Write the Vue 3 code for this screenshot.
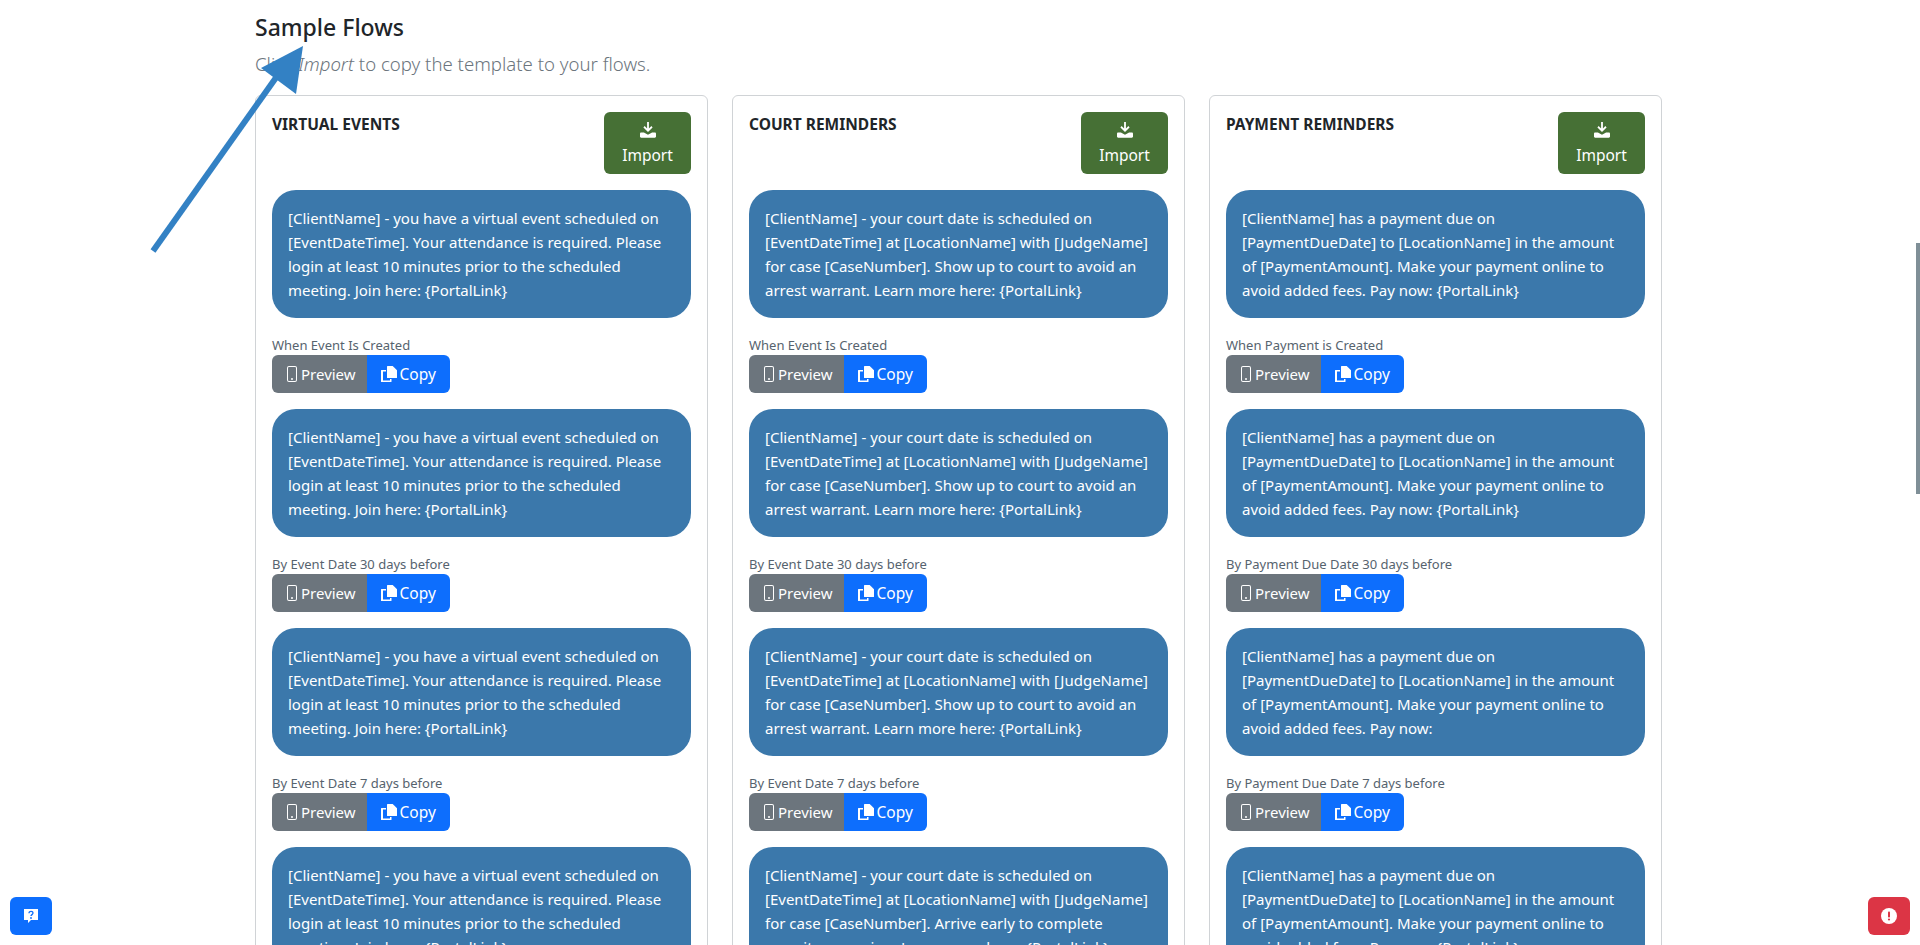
<script setup>
const flows = [
  {
    title: 'VIRTUAL EVENTS',
    messages: [
      { label: 'When Event Is Created', text: '[ClientName] - you have a virtual event scheduled on [EventDateTime]. Your attendance is required. Please login at least 10 minutes prior to the scheduled meeting. Join here: {PortalLink}' },
      { label: 'By Event Date 30 days before', text: '[ClientName] - you have a virtual event scheduled on [EventDateTime]. Your attendance is required. Please login at least 10 minutes prior to the scheduled meeting. Join here: {PortalLink}' },
      { label: 'By Event Date 7 days before', text: '[ClientName] - you have a virtual event scheduled on [EventDateTime]. Your attendance is required. Please login at least 10 minutes prior to the scheduled meeting. Join here: {PortalLink}' },
      { label: 'By Event Date 1 day before', text: '[ClientName] - you have a virtual event scheduled on [EventDateTime]. Your attendance is required. Please login at least 10 minutes prior to the scheduled meeting. Join here: {PortalLink}' }
    ]
  },
  {
    title: 'COURT REMINDERS',
    messages: [
      { label: 'When Event Is Created', text: '[ClientName] - your court date is scheduled on [EventDateTime] at [LocationName] with [JudgeName] for case [CaseNumber]. Show up to court to avoid an arrest warrant. Learn more here: {PortalLink}' },
      { label: 'By Event Date 30 days before', text: '[ClientName] - your court date is scheduled on [EventDateTime] at [LocationName] with [JudgeName] for case [CaseNumber]. Show up to court to avoid an arrest warrant. Learn more here: {PortalLink}' },
      { label: 'By Event Date 7 days before', text: '[ClientName] - your court date is scheduled on [EventDateTime] at [LocationName] with [JudgeName] for case [CaseNumber]. Show up to court to avoid an arrest warrant. Learn more here: {PortalLink}' },
      { label: 'By Event Date 1 day before', text: '[ClientName] - your court date is scheduled on [EventDateTime] at [LocationName] with [JudgeName] for case [CaseNumber]. Arrive early to complete security screening. Learn more here: {PortalLink}' }
    ]
  },
  {
    title: 'PAYMENT REMINDERS',
    messages: [
      { label: 'When Payment is Created', text: '[ClientName] has a payment due on [PaymentDueDate] to [LocationName] in the amount of [PaymentAmount]. Make your payment online to avoid added fees. Pay now: {PortalLink}' },
      { label: 'By Payment Due Date 30 days before', text: '[ClientName] has a payment due on [PaymentDueDate] to [LocationName] in the amount of [PaymentAmount]. Make your payment online to avoid added fees. Pay now: {PortalLink}' },
      { label: 'By Payment Due Date 7 days before', text: '[ClientName] has a payment due on [PaymentDueDate] to [LocationName] in the amount of [PaymentAmount]. Make your payment online to avoid added fees. Pay now:' },
      { label: 'By Payment Due Date 1 day before', text: '[ClientName] has a payment due on [PaymentDueDate] to [LocationName] in the amount of [PaymentAmount]. Make your payment online to avoid added fees. Pay now: {PortalLink}' }
    ]
  }
]
</script>

<template>
  <main class="page">
    <h2 class="heading">Sample Flows</h2>
    <p class="lead">Click <em>Import</em> to copy the template to your flows.</p>

    <div class="flows">
      <section v-for="flow in flows" :key="flow.title" class="card">
        <header class="card-head">
          <h3>{{ flow.title }}</h3>
          <button class="import" type="button">
            <svg width="16" height="16" viewBox="0 0 16 16" fill="currentColor">
              <path d="M7.100 0h1.800v6.600l2.500-2.500 1.200 1.300L8 9.900 3.400 5.400l1.200-1.300 2.500 2.500z" />
              <path d="M1.200 10.600h2.700L8 12.800l4.100-2.200h2.700c.7 0 1.200.5 1.200 1.200v2.700c0 .7-.5 1.200-1.200 1.200H1.200C.5 15.700 0 15.200 0 14.500v-2.700c0-.7.500-1.200 1.200-1.200z" />
            </svg>
            <span>Import</span>
          </button>
        </header>

        <article v-for="(msg, i) in flow.messages" :key="i" class="message">
          <div class="bubble">{{ msg.text }}</div>
          <small>{{ msg.label }}</small>
          <div class="btn-group">
            <button class="btn preview" type="button">
              <svg width="16" height="16" viewBox="0 0 16 16" fill="currentColor">
                <path d="M11 1a1 1 0 0 1 1 1v12a1 1 0 0 1-1 1H5a1 1 0 0 1-1-1V2a1 1 0 0 1 1-1zM5 0a2 2 0 0 0-2 2v12a2 2 0 0 0 2 2h6a2 2 0 0 0 2-2V2a2 2 0 0 0-2-2z" />
                <path d="M8 14a1 1 0 1 0 0-2 1 1 0 0 0 0 2" />
              </svg>
              Preview
            </button>
            <button class="btn copy" type="button">
              <svg width="16" height="16" viewBox="0 0 16 16" fill="currentColor">
                <path d="M6.500 0h5.200L16 4.300v7.200a.5.5 0 0 1-.5.5h-9a.5.5 0 0 1-.5-.5v-11a.5.5 0 0 1 .5-.5z" />
                <path d="M.5 4H5v1.500H2v9h7V13h1.500v2.500a.5.5 0 0 1-.5.5H.5a.5.5 0 0 1-.5-.5v-11a.5.5 0 0 1 .5-.5z" />
              </svg>
              Copy
            </button>
          </div>
        </article>
      </section>
    </div>

    <svg class="arrow" width="200" height="260" viewBox="0 0 200 260">
      <path d="M8 211 135 32" stroke="#3381c4" stroke-width="6" fill="none" />
      <path d="M158 6 116 28 151 54z" fill="#3381c4" />
    </svg>

    <button class="float help" type="button">
      <svg width="16" height="16" viewBox="0 0 16 16">
        <path d="M1 1h14v11H8l-3 3v-3H1z" fill="#fff" />
        <path d="M6 5.200C6 4 7 3.300 8 3.300s2 .7 2 1.800c0 1.500-2 1.500-2 2.900" stroke="#0d6efd" stroke-width="1.300" fill="none" />
        <circle cx="8" cy="10" r=".9" fill="#0d6efd" />
      </svg>
    </button>
    <button class="float alert" type="button">
      <svg width="16" height="16" viewBox="0 0 16 16">
        <circle cx="8" cy="8" r="8" fill="#fff" />
        <rect x="7" y="3.500" width="2" height="6" rx=".8" fill="#dc3545" />
        <circle cx="8" cy="11.500" r="1.100" fill="#dc3545" />
      </svg>
    </button>
    <div class="scroll-thumb"></div>
  </main>
</template>

<style>
html,
body {
  margin: 0;
  height: 100%;
  overflow: hidden;
  background: #fff;
}
</style>

<style scoped>
.page {
  height: 945px;
  overflow: hidden;
  box-sizing: border-box;
  padding: 13px 0 0 255px;
  font-family: "Noto Sans", "Open Sans", sans-serif;
  font-size: 15px;
  line-height: 24px;
  color: #212529;
}

.heading {
  margin: 0 0 9px;
  font-size: 23px;
  line-height: 28px;
  font-weight: 500;
}

.lead {
  margin: 0 0 17px;
  font-size: 18.600px;
  line-height: 28px;
  font-weight: 300;
  color: #6c757d;
}

.flows {
  display: grid;
  grid-template-columns: repeat(3, 453px);
  gap: 24px;
  align-items: start;
}

.card {
  padding: 16px;
  border: 1px solid #d0d3d6;
  border-radius: 6px;
}

.card-head {
  display: flex;
  justify-content: space-between;
  align-items: flex-start;
  margin-bottom: 16px;
}

.card-head h3 {
  margin: 0;
  font-size: 15.500px;
  line-height: 24px;
  font-weight: 700;
}

.import {
  display: flex;
  flex-direction: column;
  align-items: center;
  gap: 5px;
  width: 87px;
  height: 62px;
  padding: 10px 0 0;
  border: 0;
  border-radius: 6px;
  background: #467035;
  color: #fff;
  font: inherit;
  font-size: 15.500px;
}

.message {
  margin-bottom: 16px;
}

.bubble {
  padding: 16px;
  border-radius: 24px;
  background: #3b78ab;
  color: #fff;
  margin-bottom: 16px;
}

small {
  display: block;
  padding-top: 1px;
  font-size: 13px;
  line-height: 20px;
  color: #56636e;
}

.btn-group {
  display: flex;
}

.btn {
  display: flex;
  align-items: center;
  height: 38px;
  border: 0;
  color: #fff;
  font: inherit;
}

.preview {
  gap: 1px;
  padding: 0 11px 0 12px;
  background: #6c757d;
  border-radius: 6px 0 0 6px;
}

.copy {
  gap: 3px;
  padding: 0 14px;
  font-size: 15.500px;
  background: #0d6efd;
  border-radius: 0 6px 6px 0;
}

.arrow {
  position: absolute;
  left: 145px;
  top: 40px;
}

.float {
  position: fixed;
  bottom: 10px;
  display: flex;
  align-items: center;
  justify-content: center;
  width: 42px;
  height: 38px;
  padding: 0;
  border: 0;
  border-radius: 6px;
}

.help {
  left: 10px;
  background: #0d6efd;
}

.alert {
  right: 10px;
  background: #dc3545;
}

.scroll-thumb {
  position: fixed;
  top: 243px;
  right: 0;
  width: 4px;
  height: 251px;
  background: #7f8f97;
}
</style>
